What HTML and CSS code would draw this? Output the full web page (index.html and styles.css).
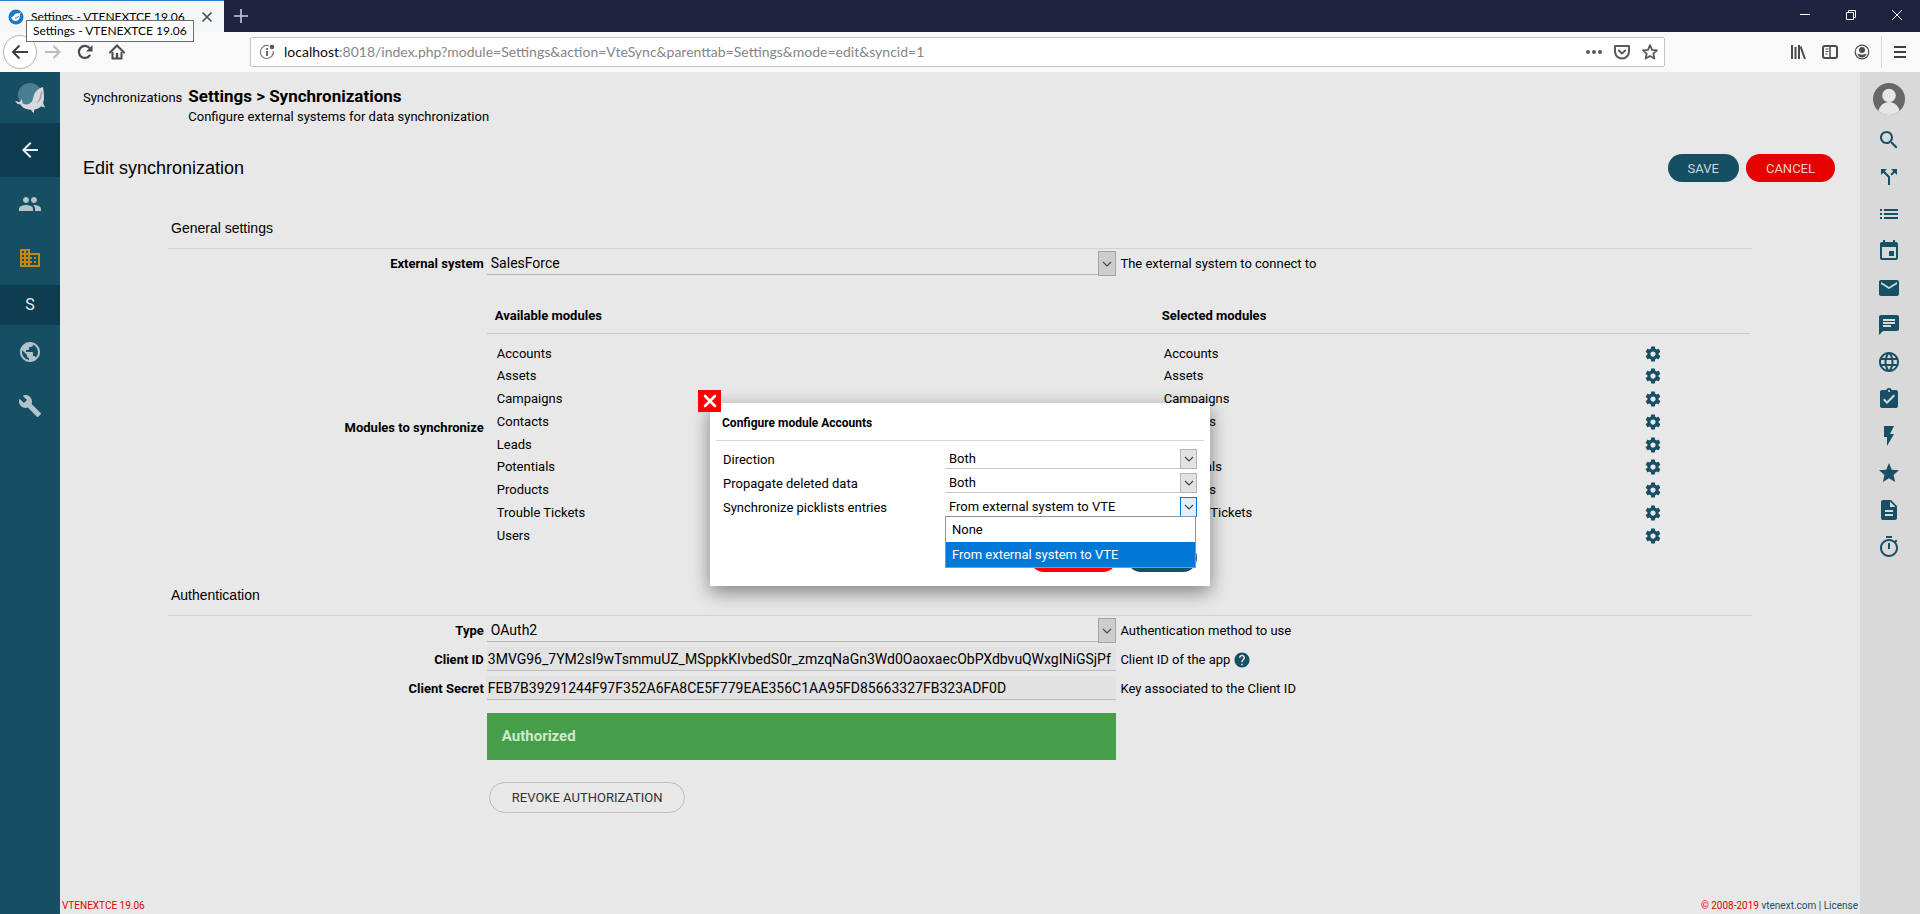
FILE: index.html
```html
<!DOCTYPE html>
<html lang="en">
<head>
  <meta charset="UTF-8"/>
  <meta name="viewport" content="width=device-width, initial-scale=1"/>
  <title>Settings - VTENEXTCE 19.06</title>
  <link rel="stylesheet" href="styles.css">
</head>
<body>
  <svg class="defs" aria-hidden="true">
    <symbol id="gear" viewBox="0 0 24 24"><path d="M19.43 12.98c.04-.32.07-.64.07-.98s-.03-.66-.07-.98l2.11-1.65c.19-.15.24-.42.12-.64l-2-3.46c-.12-.22-.39-.3-.61-.22l-2.49 1c-.52-.4-1.08-.73-1.69-.98l-.38-2.65C14.46 2.18 14.25 2 14 2h-4c-.25 0-.46.18-.49.42l-.38 2.65c-.61.25-1.17.59-1.69.98l-2.49-1c-.23-.09-.49 0-.61.22l-2 3.46c-.13.22-.07.49.12.64l2.11 1.65c-.04.32-.07.65-.07.98s.03.66.07.98l-2.11 1.65c-.19.15-.24.42-.12.64l2 3.46c.12.22.39.3.61.22l2.49-1c.52.4 1.08.73 1.69.98l.38 2.65c.03.24.24.42.49.42h4c.25 0 .46-.18.49-.42l.38-2.65c.61-.25 1.17-.59 1.69-.98l2.49 1c.23.09.49 0 .61-.22l2-3.46c.12-.22.07-.49-.12-.64l-2.11-1.65zM12 15.5c-1.93 0-3.5-1.57-3.5-3.5s1.57-3.5 3.5-3.5 3.5 1.57 3.5 3.5-1.57 3.5-3.5 3.5z"/></symbol>
    <symbol id="down" viewBox="0 0 10 6"><path d="M1 1l4 4 4-4" fill="none" stroke="currentColor" stroke-width="1.1"/></symbol>
  </svg>

  <!-- browser window -->
  <header class="browser">
    <div class="tabs">
      <div class="tab">
        <svg width="16" height="16" viewBox="0 0 16 16"><circle cx="8" cy="8" r="7.5" fill="#1c78c8"/><path d="M3 8c1 0 2-.5 2.500-1C7 4.500 9 4 10.500 4.500L13 3l-1.200 2.800C12.500 9 10.500 12 7.500 12 5.500 12 4 10.500 3 8z" fill="#fff"/><path d="M7 9c1.500.3 3-.6 3.500-2" fill="none" stroke="#1c78c8"/></svg>
        <span class="tab-title">Settings - VTENEXTCE 19.06</span>
        <button class="plain" aria-label="Close tab"><svg width="12" height="12" viewBox="0 0 12 12"><path d="M1.500 1.500l9 9M10.500 1.500l-9 9" stroke="#4a4a4f" stroke-width="1.600"/></svg></button>
      </div>
      <button class="plain new-tab" aria-label="New tab"><svg width="14" height="14" viewBox="0 0 14 14"><path d="M7 0v14M0 7h14" stroke="#c9cad8" stroke-width="1.600"/></svg></button>
      <div class="window-buttons">
        <button class="plain" aria-label="Minimize"><svg width="10" height="10" viewBox="0 0 10 10"><path d="M0 4.500h10" stroke="#fff"/></svg></button>
        <button class="plain" aria-label="Restore"><svg width="10" height="10" viewBox="0 0 10 10" fill="none" stroke="#fff"><path d="M.5 2.500h7v7h-7zM2.500 2.500v-2h7v7h-2"/></svg></button>
        <button class="plain" aria-label="Close"><svg width="10" height="10" viewBox="0 0 10 10"><path d="M0 0l10 10M10 0L0 10" stroke="#fff"/></svg></button>
      </div>
    </div>
    <div class="tooltip" role="tooltip">Settings - VTENEXTCE 19.06</div>
    <div class="toolbar">
      <button class="plain nav-back" aria-label="Back"><svg width="18" height="16" viewBox="0 0 18 16" fill="none" stroke="#3f3f43" stroke-width="2"><path d="M17 8H2M8.500 1.500L2 8l6.500 6.500"/></svg></button>
      <button class="plain nav" aria-label="Forward"><svg width="16" height="16" viewBox="0 0 16 16" fill="none" stroke="#bcbcbf" stroke-width="2"><path d="M0 8h14M8.500 2L14.500 8l-6 6"/></svg></button>
      <button class="plain nav" aria-label="Reload"><svg width="16" height="16" viewBox="0 0 16 16"><path d="M13.200 10.800A6 6 0 1 1 12.500 4" fill="none" stroke="#4a4a4f" stroke-width="2.200"/><path d="M15.500 1v6.500H9z" fill="#4a4a4f"/></svg></button>
      <button class="plain nav" aria-label="Home"><svg width="16" height="16" viewBox="0 0 16 16"><path d="M1 8.500l7-7 7 7" fill="none" stroke="#4a4a4f" stroke-width="2" stroke-linecap="round"/><path d="M3.500 8v6.500h9V8" fill="none" stroke="#4a4a4f" stroke-width="2"/><path d="M6.800 9h2.400v6H6.800z" fill="#4a4a4f"/></svg></button>
      <div class="urlbar">
        <svg width="16" height="16" viewBox="0 0 16 16"><path d="M9.500 1.700A6.500 6.500 0 1 0 14.300 7" fill="none" stroke="#77777b" stroke-width="1.200"/><circle cx="13" cy="3" r="2.300" fill="#5a5a5e"/><path d="M7.100 4h1.800v1.800H7.100zM7.100 7h1.800v5H7.100z" fill="#5a5a5e"/></svg>
        <div class="url"><span class="host">localhost</span>:8018/index.php?module=Settings&amp;action=VteSync&amp;parenttab=Settings&amp;mode=edit&amp;syncid=1</div>
        <button class="plain" aria-label="Page actions"><svg width="16" height="16" viewBox="0 0 16 16" fill="#5a5a5e"><circle cx="2" cy="8" r="2"/><circle cx="8" cy="8" r="2"/><circle cx="14" cy="8" r="2"/></svg></button>
        <button class="plain" aria-label="Save to Pocket"><svg width="16" height="16" viewBox="0 0 16 16" fill="none" stroke="#5a5a5e" stroke-width="2" stroke-linejoin="round" stroke-linecap="round"><path d="M1 2h14v5.500a7 7 0 0 1-14 0z"/><path d="M4.800 6.500L8 9.500l3.200-3"/></svg></button>
        <button class="plain" aria-label="Bookmark"><svg width="16" height="16" viewBox="0 0 16 16" fill="none" stroke="#5a5a5e" stroke-width="1.800" stroke-linejoin="round"><path d="M8 1.200l2 4.600 5 .5-3.700 3.300 1.100 4.900L8 12l-4.400 2.500 1.100-4.900L1 6.300l5-.5z"/></svg></button>
      </div>
      <button class="plain nav" aria-label="Library"><svg width="16" height="16" viewBox="0 0 16 16" stroke="#4a4a4f" stroke-width="2"><path d="M2 1v14M5.500 3v12M9 1v14" /><path d="M10.500 2.500L15 15"/></svg></button>
      <button class="plain nav" aria-label="Sidebars"><svg width="16" height="16" viewBox="0 0 16 16" fill="none" stroke="#4a4a4f"><rect x="1" y="2" width="14" height="12" rx="2" stroke-width="2"/><path d="M8 2v12" stroke-width="1.500"/><path d="M3.500 5h3M3.500 7.500h3M3.500 10h2"/></svg></button>
      <button class="plain nav" aria-label="Account"><svg width="16" height="16" viewBox="0 0 16 16"><circle cx="8" cy="8" r="6.800" fill="none" stroke="#4a4a4f" stroke-width="1.200"/><circle cx="8" cy="6" r="3" fill="#4a4a4f"/><path d="M3.500 9.500c2 1.500 7 1.500 9 0-.3 2.500-2.300 4-4.500 4s-4.200-1.500-4.500-4z" fill="#4a4a4f"/></svg></button>
      <button class="plain nav menu" aria-label="Menu"><svg width="14" height="14" viewBox="0 0 14 14"><path d="M1 2h12M1 7h12M1 12h12" stroke="#3f3f43" stroke-width="2"/></svg></button>
    </div>
  </header>

  <div class="page">
    <nav class="sidebar">
      <a class="logo" href="#" aria-label="Home">
        <svg width="32" height="32" viewBox="0 0 32 32"><circle cx="16" cy="13" r="12" fill="#4a7f90"/><path d="M1 19l4.500 1.300L8 17l.5 4.200c3 2.300 7 1.300 9.500-1.700 1.500-3 1-6 3.500-9.500C23.500 7.500 26 5.800 29 5c.5 3 .8 6 1 9 .1 2.500-.2 5-1 7l2 4.500-3.800-1.300c-2 1.800-4.200 2.800-6.700 3.300L19.500 31 17 27.800c-5-.3-9-2.300-10.500-5.300z" fill="#d6d9de"/><path d="M27.500 8.500c-1.500 4-1.500 9.500-5.500 13 4.500-1.500 5.800-6.500 6.300-10.500z" fill="#a59fa5"/><path d="M1 19l4.500 1.300 1 2.200-3-.5zM19.500 31L17 27.800l2.500-.2zM31 25.500l-3.800-1.300 1.300-1.500z" fill="#e6c3d4"/></svg>
      </a>
      <a class="side-item active" href="#" aria-label="Back"><svg viewBox="0 0 24 24"><path d="M20 11H7.830l5.590-5.590L12 4l-8 8 8 8 1.410-1.410L7.830 13H20v-2z"/></svg></a>
      <a class="side-item" href="#" aria-label="Contacts"><svg viewBox="0 0 24 24"><path d="M16 11c1.660 0 2.990-1.340 2.990-3S17.660 5 16 5c-1.660 0-3 1.340-3 3s1.340 3 3 3zm-8 0c1.660 0 2.990-1.340 2.990-3S9.660 5 8 5C6.340 5 5 6.340 5 8s1.340 3 3 3zm0 2c-2.330 0-7 1.170-7 3.500V19h14v-2.500c0-2.330-4.670-3.500-7-3.500zm8 0c-.29 0-.62.020-.97.050 1.160.84 1.970 1.970 1.970 3.450V19h6v-2.500c0-2.330-4.670-3.500-7-3.500z"/></svg></a>
      <a class="side-item company" href="#" aria-label="Accounts"><svg viewBox="0 0 24 24"><path d="M12 7V3H2v18h20V7H12zM6 19H4v-2h2v2zm0-4H4v-2h2v2zm0-4H4V9h2v2zm0-4H4V5h2v2zm4 12H8v-2h2v2zm0-4H8v-2h2v2zm0-4H8V9h2v2zm0-4H8V5h2v2zm10 12h-8v-2h2v-2h-2v-2h2v-2h-2V9h8v10zm-2-8h-2v2h2v-2zm0 4h-2v2h2v-2z"/></svg></a>
      <a class="side-item letter active" href="#">S</a>
      <a class="side-item" href="#" aria-label="Areas"><svg viewBox="0 0 24 24"><path d="M12 2C6.480 2 2 6.480 2 12s4.480 10 10 10 10-4.480 10-10S17.520 2 12 2zm-1 17.930c-3.950-.49-7-3.850-7-7.930 0-.62.080-1.210.21-1.790L9 15v1c0 1.100.9 2 2 2v1.930zm6.900-2.540c-.26-.81-1-1.390-1.900-1.390h-1v-3c0-.55-.45-1-1-1H8v-2h2c.55 0 1-.45 1-1V7h2c1.100 0 2-.9 2-2v-.41c2.930 1.190 5 4.060 5 7.410 0 2.080-.8 3.970-2.100 5.390z"/></svg></a>
      <a class="side-item" href="#" aria-label="Tools"><svg viewBox="0 0 24 24"><path d="M22.700 19l-9.100-9.100c.9-2.300.4-5-1.500-6.900-2-2-5-2.400-7.400-1.300L9 6 6 9 1.600 4.700C.4 7.100.9 10.100 2.900 12.100c1.900 1.900 4.600 2.400 6.900 1.500l9.100 9.100c.4.400 1 .4 1.400 0l2.300-2.300c.5-.4.5-1.100.1-1.400z"/></svg></a>
    </nav>

    <main class="content">
      <div class="crumbs">
        <span>Synchronizations</span>
        <div>
          <h1>Settings &gt; Synchronizations</h1>
          <p>Configure external systems for data synchronization</p>
        </div>
      </div>

      <div class="titlebar">
        <h2>Edit synchronization</h2>
        <button class="btn">SAVE</button>
        <button class="btn cancel">CANCEL</button>
      </div>

      <form class="sync-form">
        <h3>General settings</h3>
        <div class="row">
          <label for="system">External system</label>
          <div class="select">
            <select id="system"><option>SalesForce</option></select>
            <span class="arrow"><svg><use href="#down"/></svg></span>
          </div>
          <span class="help">The external system to connect to</span>
        </div>
        <div class="row modules-row">
          <span class="label">Modules to synchronize</span>
          <table class="modules">
            <thead><tr><th>Available modules</th><th>Selected modules</th><th class="tools"></th></tr></thead>
            <tbody>
              <tr><td>Accounts</td><td>Accounts</td><td><button type="button" class="plain" aria-label="Configure Accounts"><svg><use href="#gear"/></svg></button></td></tr>
              <tr><td>Assets</td><td>Assets</td><td><button type="button" class="plain" aria-label="Configure Assets"><svg><use href="#gear"/></svg></button></td></tr>
              <tr><td>Campaigns</td><td>Campaigns</td><td><button type="button" class="plain" aria-label="Configure Campaigns"><svg><use href="#gear"/></svg></button></td></tr>
              <tr><td>Contacts</td><td>Contacts</td><td><button type="button" class="plain" aria-label="Configure Contacts"><svg><use href="#gear"/></svg></button></td></tr>
              <tr><td>Leads</td><td>Leads</td><td><button type="button" class="plain" aria-label="Configure Leads"><svg><use href="#gear"/></svg></button></td></tr>
              <tr><td>Potentials</td><td>Potentials</td><td><button type="button" class="plain" aria-label="Configure Potentials"><svg><use href="#gear"/></svg></button></td></tr>
              <tr><td>Products</td><td>Products</td><td><button type="button" class="plain" aria-label="Configure Products"><svg><use href="#gear"/></svg></button></td></tr>
              <tr><td>Trouble Tickets</td><td>Trouble Tickets</td><td><button type="button" class="plain" aria-label="Configure Trouble Tickets"><svg><use href="#gear"/></svg></button></td></tr>
              <tr><td>Users</td><td>Users</td><td><button type="button" class="plain" aria-label="Configure Users"><svg><use href="#gear"/></svg></button></td></tr>
            </tbody>
          </table>
        </div>

        <h3>Authentication</h3>
        <div class="row">
          <label for="type">Type</label>
          <div class="select">
            <select id="type"><option>OAuth2</option></select>
            <span class="arrow"><svg><use href="#down"/></svg></span>
          </div>
          <span class="help">Authentication method to use</span>
        </div>
        <div class="row">
          <label for="client-id">Client ID</label>
          <input id="client-id" type="text" value="3MVG96_7YM2sI9wTsmmuUZ_MSppkKIvbedS0r_zmzqNaGn3Wd0OaoxaecObPXdbvuQWxgINiGSjPf">
          <span class="help">Client ID of the app
            <svg viewBox="0 0 24 24"><path d="M12 2C6.480 2 2 6.480 2 12s4.480 10 10 10 10-4.480 10-10S17.520 2 12 2zm1 17h-2v-2h2v2zm2.070-7.750l-.9.92C13.450 12.900 13 13.500 13 15h-2v-.5c0-1.100.45-2.100 1.170-2.830l1.240-1.260c.37-.36.59-.86.59-1.410 0-1.100-.9-2-2-2s-2 .9-2 2H8c0-2.210 1.790-4 4-4s4 1.790 4 4c0 .88-.36 1.680-.93 2.250z"/></svg>
          </span>
        </div>
        <div class="row">
          <label for="client-secret">Client Secret</label>
          <input id="client-secret" type="text" value="FEB7B39291244F97F352A6FA8CE5F779EAE356C1AA95FD85663327FB323ADF0D">
          <span class="help">Key associated to the Client ID</span>
        </div>
        <div class="row">
          <div class="auth">
            <div class="authorized" role="status">Authorized</div>
            <button type="button" class="btn outline">REVOKE AUTHORIZATION</button>
          </div>
        </div>
      </form>

      <footer>
        <span class="red">VTENEXTCE 19.06</span>
        <span><span class="red">© 2008-2019</span> <a href="#">vtenext.com</a> | <a href="#">License</a></span>
      </footer>
    </main>

    <aside class="rightbar">
      <a href="#" class="avatar" aria-label="Profile"><svg viewBox="0 0 32 32"><clipPath id="round"><circle cx="16" cy="16" r="16"/></clipPath><g clip-path="url(#round)"><path fill="#676767" d="M0 0h32v32H0z"/><circle cx="16" cy="12.500" r="6.800" fill="#e6e6e6"/><path d="M4.500 32c1-8 5-13 11.500-13s10.500 5 11.500 13z" fill="#e6e6e6"/></g></svg></a>
      <a href="#" aria-label="Search"><svg viewBox="0 0 24 24"><path d="M15.500 14h-.79l-.28-.27C15.410 12.590 16 11.110 16 9.500 16 5.910 13.090 3 9.500 3S3 5.910 3 9.500 5.910 16 9.500 16c1.610 0 3.090-.59 4.230-1.570l.27.28v.79l5 4.990L20.490 19l-4.990-5zm-6 0C7.010 14 5 11.990 5 9.500S7.010 5 9.500 5 14 7.010 14 9.500 11.990 14 9.500 14z"/></svg></a>
      <a href="#" aria-label="Processes"><svg viewBox="0 0 24 24"><path d="M14 4l2.290 2.290-2.880 2.880 1.420 1.420 2.880-2.880L20 10V4zm-4 0H4v6l2.290-2.290 4.710 4.700V20h2v-8.410l-5.290-5.300z"/></svg></a>
      <a href="#" aria-label="List"><svg viewBox="0 0 24 24"><path d="M3 13h2v-2H3v2zm0 4h2v-2H3v2zm0-8h2V7H3v2zm4 4h14v-2H7v2zm0 4h14v-2H7v2zM7 7v2h14V7H7z"/></svg></a>
      <a href="#" aria-label="Calendar"><svg viewBox="0 0 24 24"><path d="M17 12h-5v5h5v-5zM16 1v2H8V1H6v2H5c-1.110 0-1.990.9-1.990 2L3 19c0 1.100.89 2 2 2h14c1.100 0 2-.9 2-2V5c0-1.100-.9-2-2-2h-1V1h-2zm3 18H5V8h14v11z"/></svg></a>
      <a href="#" aria-label="Mail"><svg viewBox="0 0 24 24"><path d="M20 4H4c-1.100 0-1.990.9-1.990 2L2 18c0 1.100.9 2 2 2h16c1.100 0 2-.9 2-2V6c0-1.100-.9-2-2-2zm0 4l-8 5-8-5V6l8 5 8-5v2z"/></svg></a>
      <a href="#" aria-label="Talks"><svg viewBox="0 0 24 24"><path d="M20 2H4c-1.100 0-1.990.9-1.990 2L2 22l4-4h14c1.100 0 2-.9 2-2V4c0-1.100-.9-2-2-2zM6 9h12v2H6V9zm8 5H6v-2h8v2zm4-6H6V6h12v2z"/></svg></a>
      <a href="#" aria-label="Language"><svg viewBox="0 0 24 24"><path d="M11.990 2C6.470 2 2 6.480 2 12s4.470 10 9.990 10C17.520 22 22 17.520 22 12S17.520 2 11.990 2zm6.930 6h-2.950c-.32-1.250-.78-2.450-1.380-3.560 1.840.63 3.370 1.910 4.330 3.560zM12 4.040c.83 1.200 1.480 2.530 1.910 3.960h-3.820c.43-1.430 1.080-2.760 1.910-3.960zM4.260 14C4.100 13.360 4 12.690 4 12s.1-1.360.26-2h3.380c-.08.66-.14 1.320-.14 2 0 .68.060 1.340.14 2H4.260zm.82 2h2.950c.32 1.250.78 2.450 1.380 3.560-1.840-.63-3.370-1.900-4.330-3.560zm2.950-8H5.080c.96-1.660 2.490-2.930 4.330-3.560C8.810 5.550 8.350 6.750 8.030 8zM12 19.960c-.83-1.200-1.480-2.530-1.910-3.960h3.820c-.43 1.430-1.080 2.760-1.910 3.960zM14.340 14H9.660c-.09-.66-.16-1.320-.16-2 0-.68.070-1.350.16-2h4.680c.09.65.16 1.320.16 2 0 .68-.07 1.340-.16 2zm.25 5.560c.6-1.110 1.060-2.310 1.380-3.560h2.950c-.96 1.650-2.490 2.930-4.330 3.560zM16.360 14c.08-.66.14-1.320.14-2 0-.68-.06-1.340-.14-2h3.380c.16.64.26 1.310.26 2s-.1 1.360-.26 2h-3.380z"/></svg></a>
      <a href="#" aria-label="Tasks"><svg viewBox="0 0 24 24"><path d="M19 3h-4.180C14.400 1.840 13.300 1 12 1c-1.300 0-2.400.84-2.820 2H5c-1.100 0-2 .9-2 2v14c0 1.100.9 2 2 2h14c1.100 0 2-.9 2-2V5c0-1.100-.9-2-2-2zm-7 0c.55 0 1 .45 1 1s-.45 1-1 1-1-.45-1-1 .45-1 1-1zm-2 14l-4-4 1.410-1.410L10 14.170l6.590-6.590L18 9l-8 8z"/></svg></a>
      <a href="#" aria-label="Quick create"><svg viewBox="0 0 24 24"><path d="M7 2v11h3v9l7-12h-4l4-8z"/></svg></a>
      <a href="#" aria-label="Favorites"><svg viewBox="0 0 24 24"><path d="M12 17.270L18.180 21l-1.640-7.030L22 9.240l-7.190-.61L12 2 9.190 8.630 2 9.240l5.460 4.730L5.820 21z"/></svg></a>
      <a href="#" aria-label="Documents"><svg viewBox="0 0 24 24"><path d="M14 2H6c-1.100 0-1.990.9-1.990 2L4 20c0 1.100.89 2 1.990 2H18c1.100 0 2-.9 2-2V8l-6-6zm2 16H8v-2h8v2zm0-4H8v-2h8v2zm-3-5V3.500L18.500 9H13z"/></svg></a>
      <a href="#" aria-label="Timer"><svg viewBox="0 0 24 24"><path d="M15 1H9v2h6V1zm-4 13h2V8h-2v6zm8.030-6.610l1.420-1.420c-.43-.51-.9-.99-1.410-1.410l-1.420 1.420C16.070 4.740 14.120 4 12 4c-4.970 0-9 4.030-9 9s4.020 9 9 9 9-4.030 9-9c0-2.120-.74-4.070-1.970-5.610zM12 20c-3.870 0-7-3.130-7-7s3.130-7 7-7 7 3.130 7 7-3.130 7-7 7z"/></svg></a>
    </aside>

    <!-- module settings popup -->
    <div class="modal" role="dialog" aria-labelledby="modal-title">
      <button class="plain modal-close" aria-label="Close"><svg width="14" height="14" viewBox="0 0 14 14"><path d="M2 2l10 10M12 2L2 12" stroke="#fff" stroke-width="2.600" stroke-linecap="round"/></svg></button>
      <h4 id="modal-title">Configure module Accounts</h4>
      <div class="modal-row">
        <label for="direction">Direction</label>
        <div class="select">
          <select id="direction"><option>Both</option></select>
          <span class="arrow"><svg><use href="#down"/></svg></span>
        </div>
      </div>
      <div class="modal-row">
        <label for="deleted">Propagate deleted data</label>
        <div class="select">
          <select id="deleted"><option>Both</option></select>
          <span class="arrow"><svg><use href="#down"/></svg></span>
        </div>
      </div>
      <div class="modal-row">
        <label for="picklists">Synchronize picklists entries</label>
        <div class="select open">
          <select id="picklists"><option>From external system to VTE</option></select>
          <span class="arrow"><svg><use href="#down"/></svg></span>
          <ul class="options" role="listbox">
            <li role="option">None</li>
            <li role="option" aria-selected="true">From external system to VTE</li>
          </ul>
        </div>
      </div>
      <div class="modal-buttons">
        <button class="btn cancel" aria-label="Cancel"></button>
        <button class="btn" aria-label="Save"></button>
      </div>
    </div>
  </div>
</body>
</html>
```
FILE: styles.css
```css
* {box-sizing:border-box;}
body {margin:0; min-height:100vh; display:flex; flex-direction:column; background:#e8e8e8; font-family:Roboto,sans-serif; font-size:13px; line-height:18px; color:#000;}
h1,h2,h3,h4,p,ul {margin:0; padding:0;}
a {color:#174f64; text-decoration:none;}
button,input,select {font-family:inherit; color:inherit;}
svg {display:block;}
.defs {display:none;}
.plain {display:flex; align-items:center; justify-content:center; padding:0; border:0; background:none;}

/* browser */
.browser {position:relative; height:72px; font-family:Lato,sans-serif;}
.tabs {display:flex; height:32px; background:#202340;}
.tab {display:flex; align-items:center; gap:7px; width:224px; padding:0 11px 0 8px; background:#f5f6f7; border-top:1px solid #2a84d2; font-size:12px;}
.tab-title {flex:1; white-space:nowrap;}
.new-tab {width:34px;}
.window-buttons {display:flex; margin-left:auto;}
.window-buttons button {width:46px; padding-bottom:3px;}
.tooltip {position:absolute; left:26px; top:20px; padding:0 6px; background:#fff; border:1px solid #6b6b6b; font-size:12px; line-height:20px;}
.toolbar {display:flex; align-items:center; height:40px; padding:0 3px; background:#f9f9fa;}
.nav-back {width:34px; height:34px; border:1px solid #b5b5b8; border-radius:50%; background:#fff;}
.nav {width:32px; height:32px;}
.urlbar {flex:1; display:flex; align-items:center; gap:12px; height:30px; margin:0 117px; padding:0 6px 0 8px; background:#fff; border:1px solid #c4c4c8; border-radius:2px;}
.urlbar > svg {margin-right:-3px;}
.url {flex:1; overflow:hidden; white-space:nowrap; font-size:14px; color:#858588;}
.host {color:#0c0c0d;}
.menu {width:36px; margin-left:3px; border-left:1px solid #dcdcdf;}

/* page */
.page {position:relative; flex:1; display:flex;}
.sidebar {width:60px; background:#164f64;}
.logo {display:flex; align-items:center; justify-content:center; height:51px;}
.side-item {display:flex; align-items:center; justify-content:center; height:54px; color:#e3eef2;}
.side-item svg {width:24px; height:24px; fill:#b4c2ca;}
.side-item.active {background:#0f3d50;}
.side-item.active svg {fill:#e3f3f6;}
.side-item.company svg {fill:#c28a0c;}
.side-item.letter {height:40px; font-size:16px;}
.content {flex:1; display:flex; flex-direction:column; min-width:0; padding:12px 20px 0;}
.crumbs {display:flex; align-items:baseline; gap:6px; padding-left:3px;}
.crumbs h1 {font-size:17px; line-height:24px; font-weight:bold;}
.titlebar {display:flex; align-items:center; gap:7px; margin:28px 0 27px; padding:0 5px 0 3px;}
.titlebar h2 {flex:1; font:18px/28px "Liberation Sans",Arial,sans-serif;}
.btn {height:28px; padding:0 20px; border:0; border-radius:16px; background:#164f64; color:#cdd9de; font-size:13px;}
.btn.cancel {background:#e60000; color:#fbcccc;}
.sync-form {width:90%; margin:0 auto;}
.sync-form h3 {height:40px; border-bottom:1px solid #d2d2d2; padding-left:3px; font:14px/38px "Liberation Sans",Arial,sans-serif;}
.row {display:grid; grid-template-columns:20% 40% 40%; align-items:start; padding:2px 0;}
.row > * {margin:0 2px;}
.row > label,.row > .label {margin:0 1px; text-align:right; line-height:25px; font-weight:bold;}
.help {display:flex; align-items:center; gap:3px; line-height:25px;}
.help svg {width:18px; height:18px; fill:#174f64;}
.row > input {height:24px; padding:0 0 0 1px; border:0; border-bottom:1px solid #bdbdbd; background:#e2e2e2; font-size:14px;}
.select {position:relative; display:grid; height:25px;}
.select > * {grid-area:1/1;}
.select select {appearance:none; width:100%; height:24px; padding:0 4px; border:0; border-bottom:1px solid #b5b5b5; border-radius:0; background:none; font-size:14px; outline:0;}
.arrow {justify-self:end; display:flex; align-items:center; justify-content:center; width:18px; border:1px solid #a3a3a3; background:#cdcdcd; color:#444; pointer-events:none;}
.arrow svg {width:10px; height:6px;}

.modules-row {align-items:center; padding-bottom:29px;}
.modules-row > .label {padding-top:28px;}
.modules {grid-column:2 / 4; height:267px; border-collapse:separate; border-spacing:0; text-align:left;}
.modules th {height:54px; padding:27px 8px 8px; border-bottom:1px solid #c9c9c9; line-height:18px;}
.modules th:first-child {width:52.8%;}
.modules td {padding:0 10px; line-height:22px;}
.modules tbody tr:first-child td {padding-top:8px;}
.modules td:last-child {padding:0 8px;}
.modules .tools {width:9%;}
.modules .plain {width:18px; height:22px;}
.modules svg {width:18px; height:18px; fill:#174f64;}

.auth {grid-column:2;}
.authorized {margin-top:8px; padding:0 15px; background:#459f48; color:#cfe8cf; font-size:15px; line-height:47px; font-weight:bold;}
.btn.outline {height:31px; margin:22px 2px 0; padding:0 22px; border:1px solid #bcbcbc; background:none; color:#333;}
footer {display:flex; justify-content:space-between; margin:auto -18px 0; font-size:10px; line-height:16px; color:#174f64;}
.red {color:#e00000;}

.rightbar {display:flex; flex-direction:column; align-items:center; width:60px; padding:11px 2px 0 0; background:#d9d9d9;}
.rightbar a {display:flex; align-items:center; height:37px;}
.rightbar svg {width:24px; height:24px; fill:#174f64;}
.rightbar .avatar {height:38px; align-items:flex-start;}
.rightbar .avatar svg {width:32px; height:32px;}

/* popup */
.modal {position:absolute; top:331px; left:50%; width:500px; margin-left:-250px; padding:0 6px 14px; background:#fff; box-shadow:0 6px 18px rgba(0,0,0,0.45);}
.modal-close {position:absolute; left:-12px; top:-13px; width:23px; height:22px; background:#f00;}
.modal h4 {margin-bottom:7px; padding:4px 6px 0; border-bottom:1px solid #d6d6d6; font-size:12px; line-height:33px;}
.modal-row {display:grid; grid-template-columns:222px 1fr; height:24px; padding:0 7px;}
.modal-row label {line-height:24px;}
.modal .select {height:20px; margin-top:1px;}
.modal select {height:20px; border-color:#c6c6c6; font-size:13px;}
.modal .arrow {width:17px; border-color:#b5b5b5; background:#e2e2e2;}
.modal .open .arrow {border-color:#0078d7; background:#e3effb;}
.modal .open select {border-color:#174f64;}
.options {position:absolute; z-index:1; left:0; right:1px; top:19px; border:1px solid #8f959b; background:#fff; list-style:none;}
.options li {padding:0 6px; line-height:25px;}
.options [aria-selected] {background:#0078d7; color:#fff;}
.modal-buttons {display:flex; justify-content:flex-end; gap:10px; margin-top:24px; padding-right:7px;}
.modal .btn {width:70px; background:#164f64;}
.modal .btn.cancel {width:87px; background:#f00;}
```
